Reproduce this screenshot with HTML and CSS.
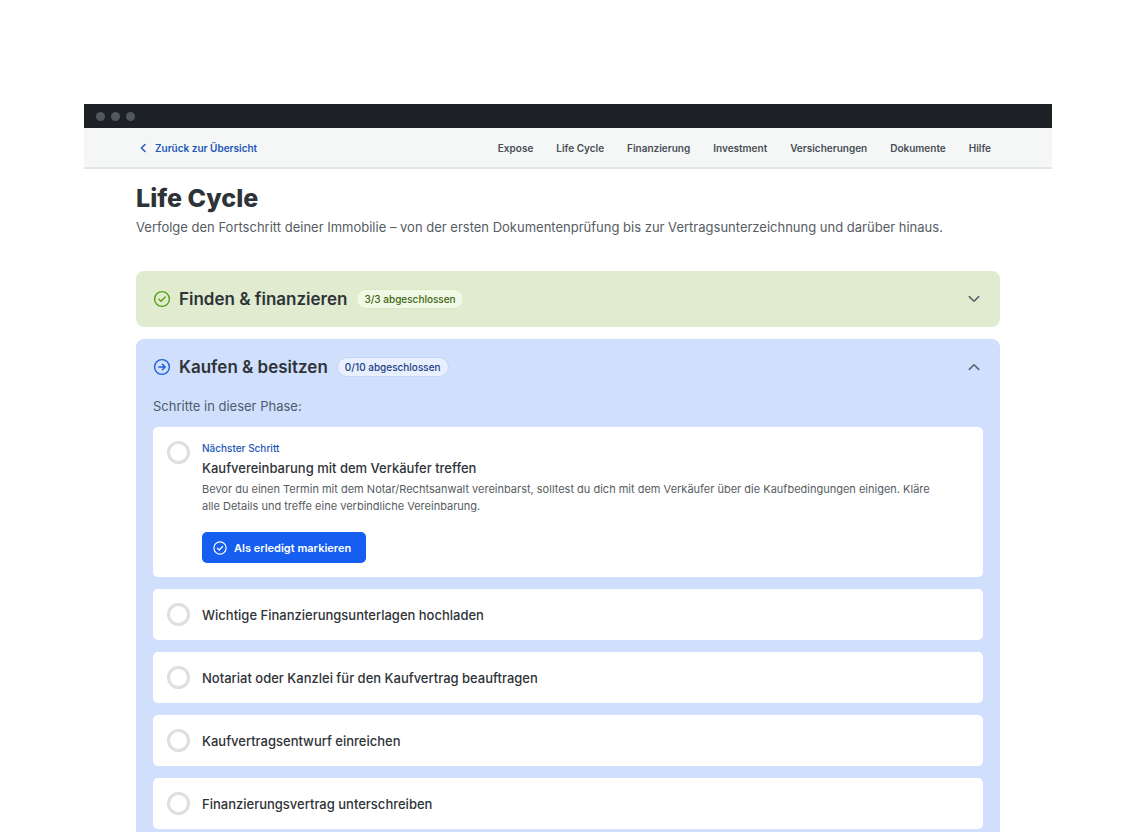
FILE: index.html
```html
<!DOCTYPE html>
<html lang="de">
<head>
<meta charset="utf-8">
<meta name="viewport" content="width=device-width, initial-scale=1">
<title>Life Cycle</title>
<link rel="stylesheet" href="styles.css">
</head>
<body>
<div class="window">
  <div class="titlebar"><span class="dot"></span><span class="dot"></span><span class="dot"></span></div>
  <header class="topnav">
    <a class="back" href="#"><svg class="back-icon" viewBox="0 0 14 14" aria-hidden="true"><path d="M9 3.4 5.4 7 9 10.6"/></svg>Zurück zur Übersicht</a>
    <nav class="links">
      <a href="#">Expose</a>
      <a href="#">Life Cycle</a>
      <a href="#">Finanzierung</a>
      <a href="#">Investment</a>
      <a href="#">Versicherungen</a>
      <a href="#">Dokumente</a>
      <a href="#">Hilfe</a>
    </nav>
  </header>
  <main class="content">
    <h1 class="title">Life Cycle</h1>
    <p class="subtitle">Verfolge den Fortschritt deiner Immobilie – von der ersten Dokumentenprüfung bis zur Vertragsunterzeichnung und darüber hinaus.</p>

    <section class="phase phase-done">
      <button class="phase-head" type="button" aria-expanded="false">
        <svg class="phase-icon" viewBox="0 0 18 18" aria-hidden="true"><circle cx="9" cy="9" r="7.4"/><path d="m5.9 9.2 2.1 2.1 4.2-4.2"/></svg>
        <span class="phase-name">Finden &amp; finanzieren</span>
        <span class="badge">3/3 abgeschlossen</span>
        <svg class="chevron" viewBox="0 0 16 16" aria-hidden="true"><path d="m3.3 5.6 4.7 4.7 4.7-4.7"/></svg>
      </button>
    </section>

    <section class="phase phase-active">
      <button class="phase-head" type="button" aria-expanded="true">
        <svg class="phase-icon" viewBox="0 0 18 18" aria-hidden="true"><circle cx="9" cy="9" r="7.4"/><path d="M5.8 9h6.2M9.4 6.2 12.2 9l-2.8 2.8"/></svg>
        <span class="phase-name">Kaufen &amp; besitzen</span>
        <span class="badge">0/10 abgeschlossen</span>
        <svg class="chevron" viewBox="0 0 16 16" aria-hidden="true"><path d="m3.3 10.4 4.7-4.7 4.7 4.7"/></svg>
      </button>
      <p class="steps-label">Schritte in dieser Phase:</p>
      <ul class="steps">
        <li class="step step-next">
          <input class="tick" type="checkbox" id="s1">
          <div class="step-body">
            <p class="step-hint">Nächster Schritt</p>
            <label class="step-title" for="s1">Kaufvereinbarung mit dem Verkäufer treffen</label>
            <p class="step-text">Bevor du einen Termin mit dem Notar/Rechtsanwalt vereinbarst, solltest du dich mit dem Verkäufer über die Kaufbedingungen einigen. Kläre alle Details und treffe eine verbindliche Vereinbarung.</p>
            <button class="primary" type="button"><svg class="primary-icon" viewBox="0 0 14 14" aria-hidden="true"><circle cx="7" cy="7" r="6.1"/><path d="m4.4 7.2 1.8 1.8 3.4-3.5"/></svg>Als erledigt markieren</button>
          </div>
        </li>
        <li class="step"><input class="tick" type="checkbox" id="s2"><label class="step-title" for="s2">Wichtige Finanzierungsunterlagen hochladen</label></li>
        <li class="step"><input class="tick" type="checkbox" id="s3"><label class="step-title" for="s3">Notariat oder Kanzlei für den Kaufvertrag beauftragen</label></li>
        <li class="step"><input class="tick" type="checkbox" id="s4"><label class="step-title" for="s4">Kaufvertragsentwurf einreichen</label></li>
        <li class="step"><input class="tick" type="checkbox" id="s5"><label class="step-title" for="s5">Finanzierungsvertrag unterschreiben</label></li>
      </ul>
    </section>
  </main>
</div>
</body>
</html>
```
FILE: styles.css
```css
* { box-sizing: border-box; }
body {
  margin: 0;
  padding: 104px 84px 0;
  background: #fff;
  color: #2e3338;
  font-family: Inter, "Liberation Sans", sans-serif;
  font-size: 13px;
}
h1, p, ul { margin: 0; padding: 0; }
a { text-decoration: none; color: inherit; }
button { font: inherit; color: inherit; border: 0; background: none; cursor: pointer; }
svg { fill: none; stroke: currentColor; stroke-linecap: round; stroke-linejoin: round; flex: none; }

.titlebar {
  display: flex;
  align-items: center;
  gap: 6px;
  height: 24px;
  padding: 0 12px;
  background: #1d2125;
}
.dot { width: 9px; height: 9px; border-radius: 50%; background: #50575f; }

.topnav {
  display: flex;
  align-items: center;
  justify-content: space-between;
  height: 41px;
  padding: 0 61px 0 52px;
  background: #f5f7f7;
  border-bottom: 2px solid #e3e6e6;
  font-size: 10px;
  font-weight: 600;
}
.back { display: flex; align-items: center; gap: 5px; color: #1c56b8; }
.back-icon { width: 14px; height: 14px; stroke-width: 1.4; }
.links { display: flex; gap: 23px; color: #474e54; }

.content { padding: 14px 52px 0; }
.title { font-size: 25px; line-height: 30px; font-weight: 800; }
.subtitle { margin: 5px 0 35px; line-height: 18px; color: #565c62; }

.phase { border-radius: 8px; padding: 0 17px; }
.phase + .phase { margin-top: 12px; }
.phase-done { background: #e0ebd0; --accent: #5ba012; --badge: #f0f8e6; --badge-text: #3d6610; --badge-line: #d8eac4; }
.phase-active { background: #d0dffc; --accent: #1c5fd6; --badge: #e8f0ff; --badge-text: #1c4086; --badge-line: #c2d5fa; padding-bottom: 17px; }
.phase-head {
  display: flex;
  align-items: center;
  width: 100%;
  height: 56px;
  padding: 0 1px 0 0;
  text-align: left;
}
.phase-icon { width: 18px; height: 18px; stroke-width: 1.4; color: var(--accent); }
.phase-name { margin: 0 9px 0 8px; font-size: 17px; line-height: 24px; font-weight: 600; }
.badge {
  padding: 0 7px;
  border: 1px solid var(--badge-line);
  border-radius: 10px;
  background: var(--badge);
  color: var(--badge-text);
  font-size: 10px;
  line-height: 18px;
  font-weight: 500;
}
.chevron { width: 16px; height: 16px; margin-left: auto; stroke-width: 1.5; color: #56606b; }
.steps-label { margin: 2px 0 12px; line-height: 18px; color: #4f5b6c; }

.steps { display: flex; flex-direction: column; gap: 12px; list-style: none; }
.step {
  display: flex;
  align-items: center;
  gap: 12px;
  min-height: 51px;
  padding: 14px;
  border-radius: 5px;
  background: #fff;
}
.step-next { align-items: flex-start; }
.tick {
  appearance: none;
  flex: none;
  width: 23px;
  height: 23px;
  margin: 0;
  border: 3px solid #dedfe0;
  border-radius: 50%;
}
.tick:checked { background: #1c5fd6; }
.step-body { flex: 1; }
.step-hint { font-size: 10px; line-height: 14px; font-weight: 500; color: #1c56b8; }
.step-title { font-weight: 500; line-height: 18px; }
.step-body .step-title { display: block; margin: 4px 0; }
.step-text { padding-right: 24px; font-size: 11px; line-height: 17px; color: #565c62; }
.primary {
  display: flex;
  align-items: center;
  gap: 7px;
  height: 31px;
  margin-top: 17px;
  padding: 0 15px 0 11px;
  border-radius: 5px;
  background: #155eef;
  color: #fff;
  font-size: 11px;
  font-weight: 600;
}
.primary-icon { width: 14px; height: 14px; stroke-width: 1.2; }
```
